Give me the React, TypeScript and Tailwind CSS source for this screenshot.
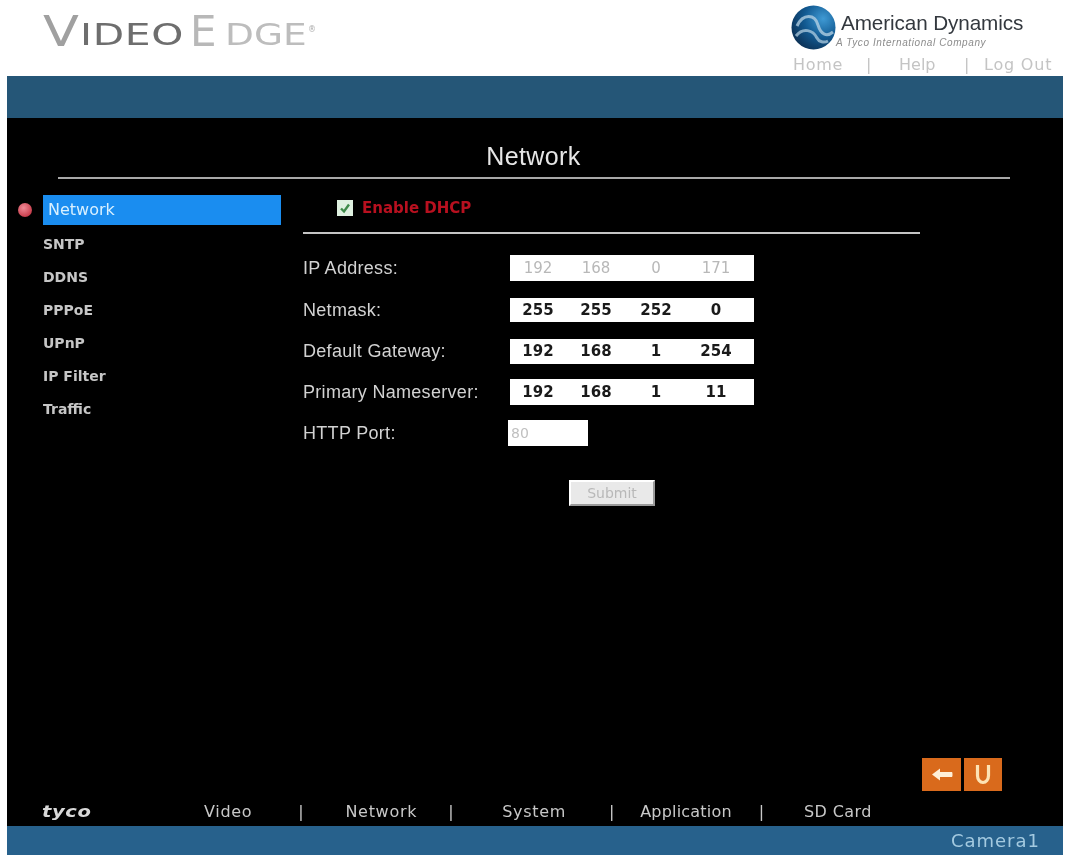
import React from "react";

const sans = "font-['Liberation_Sans',Arial,sans-serif]";
const deja = "font-['DejaVu_Sans',Verdana,sans-serif]";

const sideItems: [string, string][] = [
  ["SNTP", "mt-[9px]"],
  ["DDNS", "mt-[13px]"],
  ["PPPoE", "mt-[13px]"],
  ["UPnP", "mt-[13px]"],
  ["IP Filter", "mt-[13px]"],
  ["Traffic", "mt-[13px]"],
];

const rows: { label: string; vals: string[]; cls: string; dim?: boolean }[] = [
  { label: "IP Address:", vals: ["192", "168", "0", "171"], cls: "mt-[21px] h-[26px]", dim: true },
  { label: "Netmask:", vals: ["255", "255", "252", "0"], cls: "mt-[17px] h-[24px]" },
  { label: "Default Gateway:", vals: ["192", "168", "1", "254"], cls: "mt-[17px] h-[25px]" },
  { label: "Primary Nameserver:", vals: ["192", "168", "1", "11"], cls: "mt-[15px] h-[26px]" },
];

function Globe() {
  return (
    <svg width="45" height="45" viewBox="0 0 45 45" className="shrink-0">
      <defs>
        <radialGradient id="g" cx="0.72" cy="0.3" r="0.85">
          <stop offset="0" stopColor="#3f9ad4" />
          <stop offset="0.5" stopColor="#125a92" />
          <stop offset="1" stopColor="#0b2c4e" />
        </radialGradient>
      </defs>
      <circle cx="22.5" cy="22.5" r="22" fill="url(#g)" />
      <path d="M6 21C12 8 24 9 27 20C30 30 36 32 42 27" fill="none" stroke="#b9d4e6" strokeWidth="3" opacity="0.75" />
      <path d="M5 31C12 22 22 25 26 33C28 37 33 38 37 36" fill="none" stroke="#b9d4e6" strokeWidth="3" opacity="0.7" />
    </svg>
  );
}

export default function App() {
  return (
    <div className={`w-[1070px] h-[859px] bg-white overflow-hidden flex flex-col blur-[0.5px] ${sans}`}>
      <header className="h-[76px] flex justify-between">
        <div className={`ml-[43px] mt-[12px] h-[42px] flex items-end ${deja}`}>
          <span className="w-[37px] text-[42px] leading-[44px] text-[#a0a0a0] scale-x-[1.25] origin-left">V</span>
          <span className="w-[110px] text-[30px] leading-[38px] text-[#6e6e6e] tracking-[0.5px] scale-x-[1.36] origin-left">IDEO</span>
          <span className="w-[35px] text-[42px] leading-[44px] text-[#b8b8b8]">E</span>
          <span className="w-[82px] text-[30px] leading-[38px] text-[#bdbdbd] scale-x-[1.25] origin-left">DGE</span>
          <span className="text-[8px] self-start mt-[12px] ml-[1px] text-[#aaaaaa]">®</span>
        </div>
        <div className="w-[279px] pt-[5px] flex flex-col">
          <div className="flex">
            <Globe />
            <div className="ml-[5px] mt-[7px] w-[200px]">
              <div className="text-[20.7px] leading-[22px] text-[#33383e] whitespace-nowrap tracking-[-0.1px]">American Dynamics</div>
              <div className="-ml-[5px] mt-[4px] text-[10px] leading-[9px] italic text-[#8c8c8c] tracking-[0.6px] whitespace-nowrap">A Tyco International Company</div>
            </div>
          </div>
          <div className={`flex ml-[2px] mt-[7px] text-[16px] leading-[16px] text-[#c4c4c4] whitespace-nowrap ${deja}`}>
            <span className="w-[50px] tracking-[0.7px]">Home</span>
            <span className="ml-[23px] w-[6px]">|</span>
            <span className="ml-[27px] w-[38px]">Help</span>
            <span className="ml-[27px] w-[6px]">|</span>
            <span className="ml-[14px] tracking-[0.8px]">Log Out</span>
          </div>
        </div>
      </header>

      <div className="mx-[7px] flex-1 flex flex-col">
        <div className="h-[42px] bg-[#255677]" />
        <main className="h-[708px] bg-black flex flex-col">
          <h1 className="pt-[23px] h-[53px] text-center text-[25px] leading-[30px] text-[#e6e6e6] tracking-[0.4px] -ml-[3px]">Network</h1>
          <div className="ml-[51px] w-[952px] h-[2px] bg-[#a8a8a8] mt-[6px]" />

          <div className="flex mt-[16px]">
            <aside className="ml-[11px] w-[285px] flex">
              <div className="w-[14px] h-[14px] mt-[8px] rounded-full bg-[radial-gradient(circle_at_40%_35%,#f08a96,#b8202f)]" />
              <div className={`ml-[11px] w-[238px] text-[15px] font-bold ${deja}`}>
                <div className="h-[30px] bg-[#1a8df0] pl-[5px] leading-[30px] text-[16px] text-[#d8f0ff] font-normal">Network</div>
                {sideItems.map(([t, c]) => (
                  <div key={t} className={`${c} h-[20px] leading-[20px] text-[14px] text-[#c6c6c6]`}>{t}</div>
                ))}
              </div>
            </aside>

            <section className="w-[617px]">
              <div className="h-[26px] flex items-center pl-[34px]">
                <div className="w-[16px] h-[16px] bg-[#dff0e0] flex items-center justify-center">
                  <svg width="12" height="12" viewBox="0 0 12 12"><path d="M2 6.5L5 9.5L10 2.5" fill="none" stroke="#3f8a4a" strokeWidth="2.4" /></svg>
                </div>
                <span className={`ml-[9px] text-[15px] font-bold text-[#b8101f] ${deja}`}>Enable DHCP</span>
              </div>
              <div className="h-[2px] bg-[#c4c4c4] mt-[11px]" />

              {rows.map((r) => (
                <div key={r.label} className={`${r.cls} flex items-center`}>
                  <div className="w-[207px] text-[18px] text-[#d2d2d2] tracking-[0.3px]">{r.label}</div>
                  <div className={`w-[244px] h-full bg-white grid grid-cols-[56px_60px_60px_60px] items-center text-center text-[15px] ${deja} ${r.dim ? "text-[#b8b8b8] font-normal" : "text-[#1a1a1a] font-bold"}`}>
                    {r.vals.map((v, i) => <span key={i}>{v}</span>)}
                  </div>
                </div>
              ))}

              <div className="mt-[15px] h-[26px] flex items-center">
                <div className="w-[205px] text-[18px] text-[#d2d2d2] tracking-[0.3px]">HTTP Port:</div>
                <div className={`w-[80px] h-full bg-white pl-[3px] text-[14px] leading-[26px] text-[#c0c0c0] ${deja}`}>80</div>
              </div>

              <div className={`mt-[34px] ml-[266px] w-[86px] h-[26px] bg-[#e9e9e9] border-2 border-t-white border-l-white border-r-[#9a9a9a] border-b-[#9a9a9a] text-center text-[14px] leading-[22px] text-[#b8b8b8] ${deja}`}>Submit</div>
            </section>
          </div>

          <div className="flex-1" />

          <div className="flex justify-end gap-[3px] pr-[61px]">
            <div className="w-[39px] h-[33px] bg-[#d96a1c] flex items-center justify-center">
              <svg width="22" height="15" viewBox="0 0 22 15"><path d="M1 7.5L9 1.5V5H20.5C21.3 5 21.5 5.6 21.5 7.5C21.5 9.4 21.3 10 20.5 10H9V13.5Z" fill="#fff0d8" /></svg>
            </div>
            <div className="w-[38px] h-[33px] bg-[#d96a1c] flex items-center justify-center">
              <svg width="18" height="21" viewBox="0 0 18 21"><path d="M3.5 1V11.5C3.5 15.5 6 18.5 9 18.5C12 18.5 14.5 15.5 14.5 11.5V1" fill="none" stroke="#fde3b4" strokeWidth="3.2" /></svg>
            </div>
          </div>

          <nav className={`h-[35px] pt-[12px] flex text-[16px] leading-[18px] tracking-[0.7px] text-[#c8c8c8] whitespace-nowrap ${deja}`}>
            <span className="ml-[35px] w-[50px] italic font-bold text-[15px] tracking-[0.5px] text-[#d8d8d8] scale-x-[1.3] origin-left">tyco</span>
            <span className="ml-[112px]">Video</span>
            <span className="ml-[46px]">|</span>
            <span className="ml-[41px]">Network</span>
            <span className="ml-[31px]">|</span>
            <span className="ml-[48px]">System</span>
            <span className="ml-[43px]">|</span>
            <span className="ml-[25px] tracking-[0.2px]">Application</span>
            <span className="ml-[27px]">|</span>
            <span className="ml-[39px] tracking-[0.4px]">SD Card</span>
          </nav>
        </main>
        <div className={`h-[29px] bg-[#27618c] flex items-center justify-end pr-[23px] text-[18px] tracking-[1px] text-[#a4cae0] ${deja}`}>Camera1</div>
      </div>
      <div className="h-[4px]" />
    </div>
  );
}
